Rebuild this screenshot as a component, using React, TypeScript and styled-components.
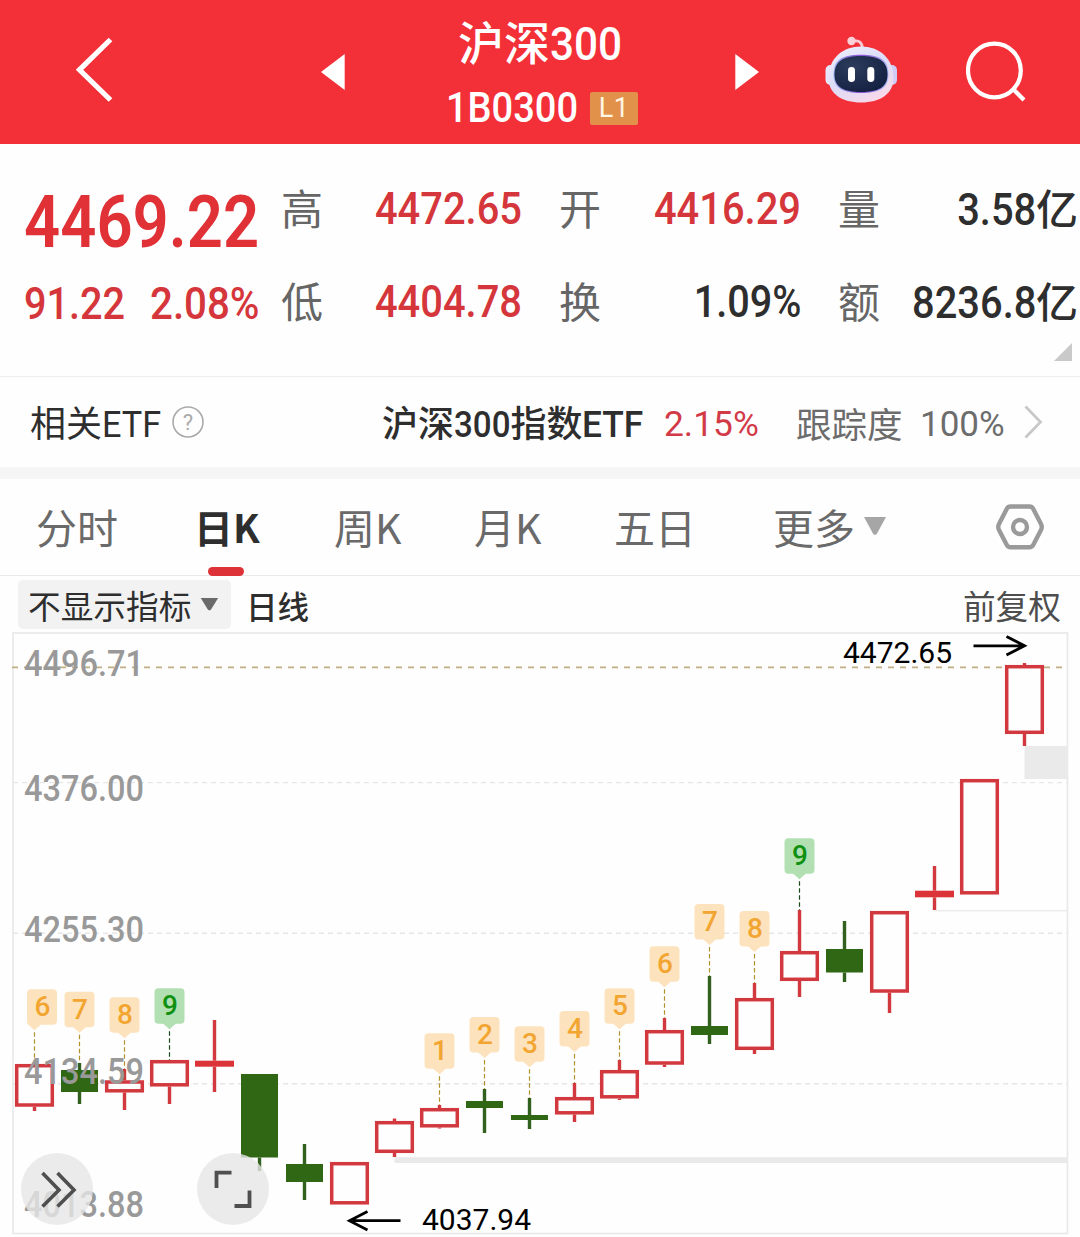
import React from "react";
import styled, { createGlobalStyle } from "styled-components";

const GlobalStyle = createGlobalStyle`
  * { box-sizing: border-box; }
  body { margin: 0; background: #fefefe; }
`;

const SANS = `Roboto, "Noto Sans CJK SC", sans-serif`;
const CJK = `"Noto Sans CJK SC", Roboto, sans-serif`;

const Page = styled.main`
  width: 1080px;
  height: 1237px;
  overflow: hidden;
  display: flex;
  flex-direction: column;
  background: #fefefe;
  color: #2e2e2e;
  font-family: ${CJK};
`;

/* Roboto figures squeezed to the narrow proportions of a DIN face */
const Figure = styled.span<{
  $size: number;
  $squeeze?: number;
  $weight?: number;
  $from?: "left" | "right";
  $color?: string;
  $trim?: number;
}>`
  display: inline-block;
  flex: none;
  margin-right: ${(p) => -(p.$trim ?? 0)}px;
  font-family: ${SANS};
  font-size: ${(p) => p.$size}px;
  font-weight: ${(p) => p.$weight ?? 500};
  line-height: 1;
  white-space: nowrap;
  color: ${(p) => p.$color ?? "inherit"};
  transform: scaleX(${(p) => p.$squeeze ?? 1});
  transform-origin: ${(p) => p.$from ?? "left"} center;
`;

const Han = styled.span<{ $size: number; $weight?: number; $color?: string }>`
  flex: none;
  font-size: ${(p) => p.$size}px;
  font-weight: ${(p) => p.$weight ?? 400};
  line-height: 1;
  white-space: nowrap;
  color: ${(p) => p.$color ?? "inherit"};
`;

/* ---------- header ---------- */

const Header = styled.header`
  flex: none;
  height: 144px;
  display: grid;
  grid-template-columns: 245px 24px 390px 24px 72px 60px;
  column-gap: 0;
  padding-left: 76px;
  background: #f32f38;
  color: #fff;
  align-items: center;
  & > :nth-child(1) { margin-bottom: 4px; }
  & > :nth-child(5) { margin-left: 66px; margin-bottom: 4px; }
  & > :nth-child(6) { margin-left: 135px; }
`;

const TitleBlock = styled.div`
  height: 144px;
  padding-top: 17px;
  display: flex;
  flex-direction: column;
  align-items: center;
`;

const TitleLine = styled.div`
  width: 164px;
  height: 52px;
  display: flex;
  align-items: baseline;
`;

const CodeLine = styled.div`
  width: 192px;
  height: 33px;
  margin-top: 23px;
  margin-left: 4px;
  display: flex;
  justify-content: space-between;
  align-items: center;
`;

const CodeSlot = styled.div`
  width: 132px;
  height: 42px;
  margin-top: -2px;
`;

const LevelTag = styled.div`
  width: 48px;
  height: 33px;
  border-radius: 2px;
  background: #e2914a;
  display: flex;
  align-items: center;
  justify-content: center;
  font: 400 27px/33px Roboto, sans-serif;
  letter-spacing: 0.5px;
  color: #fff6e4;
`;

/* ---------- quote ---------- */

const Quote = styled.section`
  flex: none;
  position: relative;
  height: 233px;
  padding: 18px 2px 0 25px;
  border-bottom: 1px solid #ededed;
  display: grid;
  grid-template-columns: 256px 278px 279px 1fr;
  grid-template-rows: 93px 93px;
`;

const Latest = styled.div`
  padding-top: 24px;
  margin-left: -1px;
  color: #e03236;
`;

const Change = styled.div`
  display: grid;
  grid-template-columns: 126px 1fr;
  align-items: center;
  padding-top: 4px;
  margin-left: -1px;
  color: #d5363b;
`;

const Cell = styled.div<{ $tone?: "up" | "plain"; $end?: boolean }>`
  display: flex;
  align-items: center;
  justify-content: space-between;
  padding-right: ${(p) => (p.$end ? 0 : 37)}px;
  color: ${(p) => (p.$tone === "up" ? "#d5363b" : "#2e2e2e")};
`;

const Label = styled.span`
  flex: none;
  padding-bottom: 4px;
  font-size: 42px;
  line-height: 1;
  color: #666;
`;

const Amount = styled.div`
  display: flex;
  align-items: baseline;
`;

const Corner = styled.i`
  position: absolute;
  right: 8px;
  bottom: 15px;
  width: 18px;
  height: 18px;
  background: #c9c9c9;
  clip-path: polygon(100% 0, 100% 100%, 0 100%);
`;

/* ---------- related ETF ---------- */

const EtfRow = styled.section`
  flex: none;
  height: 102px;
  padding: 2px 38px 0 30px;
  border-bottom: 12px solid #f5f5f5;
  display: grid;
  grid-template-columns: 141px 211px 282px 132px 124px 104px 18px;
  align-items: center;
  & > svg { margin-bottom: 2px; }
`;

const Phrase = styled.div`
  display: flex;
  align-items: baseline;
`;

const EtfNumber = styled.div`
  padding-top: 2px;
`;

/* ---------- tabs ---------- */

const Tabs = styled.nav`
  flex: none;
  height: 97px;
  padding-left: 36px;
  border-bottom: 1px solid #e9e9e9;
  display: grid;
  grid-template-columns: 161px 137px 140px 140px 159px 223px 48px;
  align-items: center;
  color: #6a6a6a;
`;

const Tab = styled.div<{ $active?: boolean }>`
  position: relative;
  height: 96px;
  padding-bottom: 2px;
  display: flex;
  align-items: center;
  font-size: ${(p) => (p.$active ? 39 : 41)}px;
  text-indent: ${(p) => (p.$active ? -3 : 0)}px;
  line-height: 1;
  font-weight: ${(p) => (p.$active ? 700 : 400)};
  color: ${(p) => (p.$active ? "#2e2e2e" : "inherit")};
`;

const Underline = styled.i`
  position: absolute;
  left: 11px;
  bottom: -1px;
  width: 36px;
  height: 9px;
  border-radius: 5px;
  background: #dd3338;
`;

const Down = styled.i<{ $w: number; $h: number; $color: string; $gap: number }>`
  width: ${(p) => p.$w}px;
  height: ${(p) => p.$h}px;
  margin-left: ${(p) => p.$gap}px;
  background: ${(p) => p.$color};
  clip-path: polygon(0 0, 100% 0, 58% 94%, 50% 100%, 42% 94%);
`;

/* ---------- indicator bar ---------- */

const IndicatorBar = styled.div`
  flex: none;
  height: 56px;
  padding: 0 19px 0 18px;
  display: flex;
  align-items: center;
  & > span { padding-top: 3px; }
`;

const Picker = styled.div`
  width: 213px;
  height: 49px;
  padding-left: 10px;
  margin-right: 15px;
  border-radius: 5px;
  background: #f2f2f2;
  display: flex;
  align-items: center;
  & > span { padding-top: 3px; }
`;

const Push = styled.div`
  flex: 1;
`;

/* ---------- chart ---------- */

const ChartArea = styled.section`
  flex: none;
  position: relative;
  height: 605px;
`;

const Plot = styled.svg`
  display: block;
`;

const RoundButton = styled.button<{ $left: number }>`
  position: absolute;
  left: ${(p) => p.$left}px;
  top: 521px;
  width: 72px;
  height: 72px;
  padding: 0;
  border: 0;
  border-radius: 50%;
  background: rgba(230, 230, 230, 0.8);
`;

type Candle = {
  x: number;
  top: number;
  bottom: number;
  high: number;
  low: number;
  kind?: "down" | "flat";
};

const candles: Candle[] = [
  { x: 34.5, top: 1064, bottom: 1106.7, high: 1064, low: 1111 },
  { x: 79.5, top: 1070, bottom: 1092, high: 1063, low: 1104, kind: "down" },
  { x: 124.5, top: 1080.3, bottom: 1092.5, high: 1069, low: 1110 },
  { x: 169.5, top: 1060, bottom: 1086.5, high: 1060, low: 1104 },
  { x: 214.5, top: 1060.7, bottom: 1066.7, high: 1020, low: 1092, kind: "flat" },
  { x: 259.5, top: 1074, bottom: 1157.5, high: 1074, low: 1171, kind: "down" },
  { x: 304.5, top: 1164, bottom: 1182, high: 1144, low: 1200, kind: "down" },
  { x: 349.5, top: 1162, bottom: 1204.5, high: 1162, low: 1204 },
  { x: 394.5, top: 1121, bottom: 1153, high: 1118.5, low: 1157 },
  { x: 439.5, top: 1108, bottom: 1127.5, high: 1105, low: 1128.5 },
  { x: 484.5, top: 1101, bottom: 1108, high: 1089, low: 1133, kind: "down" },
  { x: 529.5, top: 1115, bottom: 1120, high: 1098, low: 1129, kind: "down" },
  { x: 574.5, top: 1097, bottom: 1114.5, high: 1083, low: 1122 },
  { x: 619.5, top: 1070, bottom: 1098.5, high: 1060, low: 1100 },
  { x: 664.5, top: 1030, bottom: 1064.7, high: 1018, low: 1067 },
  { x: 709.5, top: 1026, bottom: 1035, high: 976, low: 1044, kind: "down" },
  { x: 754.5, top: 998, bottom: 1050, high: 983, low: 1054 },
  { x: 799.5, top: 951, bottom: 981, high: 910, low: 997 },
  { x: 844.5, top: 949, bottom: 972.5, high: 921, low: 982, kind: "down" },
  { x: 889.5, top: 911, bottom: 992.7, high: 911, low: 1013 },
  { x: 934.5, top: 890.7, bottom: 897.3, high: 866, low: 910, kind: "flat" },
  { x: 979.5, top: 779, bottom: 894.5, high: 779, low: 894 },
  { x: 1024.5, top: 665, bottom: 734, high: 663, low: 746 },
];

type Marker = { x: number; top: number; n: number; to: number; shift?: number };

const markers: Marker[] = [
  { x: 34.5, top: 989.3, n: 6, to: 1064, shift: 7.5 },
  { x: 79.5, top: 991.7, n: 7, to: 1063 },
  { x: 124.5, top: 997.3, n: 8, to: 1069 },
  { x: 169.5, top: 988.3, n: 9, to: 1060 },
  { x: 439.5, top: 1033.3, n: 1, to: 1105 },
  { x: 484.5, top: 1017, n: 2, to: 1089 },
  { x: 529.5, top: 1026.3, n: 3, to: 1098 },
  { x: 574.5, top: 1011, n: 4, to: 1083 },
  { x: 619.5, top: 988.3, n: 5, to: 1060 },
  { x: 664.5, top: 946.3, n: 6, to: 1018 },
  { x: 709.5, top: 904, n: 7, to: 976 },
  { x: 754.5, top: 911, n: 8, to: 983 },
  { x: 799.5, top: 838.3, n: 9, to: 910 },
];

const axis = [
  { y: 675.7, label: "4496.71" },
  { y: 801, label: "4376.00" },
  { y: 942, label: "4255.30" },
  { y: 1083.7, label: "4134.59" },
  { y: 1217, label: "4013.88" },
];

const RED = "#d2393f";
const GREEN = "#2f6714";

function CandleShape({ x, top, bottom, high, low, kind }: Candle) {
  const color = kind === "down" ? GREEN : kind === "flat" ? "#dc3338" : RED;
  const wick = kind === "down" ? "#32601f" : RED;
  return (
    <g>
      {high < top && <rect x={x - 1.7} y={high} width={3.4} height={top - high} fill={wick} />}
      {low > bottom && <rect x={x - 1.7} y={bottom} width={3.4} height={low - bottom} fill={wick} />}
      {kind === "down" ? (
        <rect x={x - 18.5} y={top} width={37} height={bottom - top} fill={color} />
      ) : kind === "flat" ? (
        <rect x={x - 19.5} y={top} width={39} height={bottom - top} fill={color} />
      ) : (
        <rect
          x={x - 17.8}
          y={top + 1.7}
          width={35.6}
          height={bottom - top - 3.4}
          fill="#fefefe"
          stroke={color}
          strokeWidth={3.5}
        />
      )}
    </g>
  );
}

function MarkerShape({ x, top, n, to, shift = 0 }: Marker) {
  const cx = x + shift;
  const nine = n === 9;
  const fill = nine ? "#b2e0b2" : "#fde3bd";
  return (
    <g>
      <line
        x1={x}
        x2={x}
        y1={top + 43}
        y2={to}
        stroke={nine ? "#1d4a1d" : "#b3912f"}
        strokeWidth={1.2}
        strokeDasharray="4.5 2.5"
      />
      <path d={`M${x - 8} ${top + 34} L${x} ${top + 41} L${x + 8} ${top + 34} Z`} fill={fill} />
      <rect x={cx - 15} y={top} width={30} height={35.5} rx={4} fill={fill} />
      <text
        x={cx + 0.5}
        y={top + 26.9}
        textAnchor="middle"
        fontFamily="Roboto, sans-serif"
        fontSize={28}
        fontWeight={500}
        fill={nine ? "#109010" : "#f2a530"}
      >
        {n}
      </text>
    </g>
  );
}

function Chart() {
  return (
    <Plot width="1080" height="605" viewBox="0 632 1080 605">
      <rect x="13" y="633" width="1054.5" height="600.5" fill="none" stroke="#e8e8e8" strokeWidth="1.6" />
      <g stroke="#e6e6e6" strokeWidth="1.4" strokeDasharray="5 4">
        <line x1="13" x2="1067" y1="782.6" y2="782.6" />
        <line x1="13" x2="1067" y1="933.2" y2="933.2" />
        <line x1="13" x2="1067" y1="1083.8" y2="1083.8" />
      </g>
      <line x1="12" x2="1067" y1="667.3" y2="667.3" stroke="#bfae84" strokeWidth="1.8" strokeDasharray="6 6" />
      <rect x="1024.5" y="746" width="43.5" height="33" fill="#eaeaea" />
      <rect x="934.5" y="910" width="133" height="1.4" fill="#ebebeb" />
      <rect x="394.5" y="1157.2" width="673.5" height="5.8" fill="#e9e9e9" />
      {candles.map((c) => (
        <CandleShape key={c.x} {...c} />
      ))}
      {markers.map((m) => (
        <MarkerShape key={m.x} {...m} />
      ))}
      <g fontFamily="Roboto, sans-serif" fontSize="36" fontWeight="500" fill="#999">
        {axis.map((a) => (
          <text key={a.label} x="24" y={a.y} textLength="120" lengthAdjust="spacingAndGlyphs">
            {a.label}
          </text>
        ))}
      </g>
      <g fontFamily="Roboto, sans-serif" fontSize="30" fill="#000">
        <text x="843" y="663.2">4472.65</text>
        <text x="422" y="1230">4037.94</text>
      </g>
      <g fill="none" stroke="#000" strokeWidth="2.8">
        <path d="M973.5 645.8 H1024 M1006.5 636.5 L1024.5 645.8 L1006.5 655" />
        <path d="M400.5 1220.7 H350 M367.5 1211.5 L349.5 1220.7 L367.5 1230" />
      </g>
    </Plot>
  );
}

/* ---------- icons ---------- */

const BackIcon = () => (
  <svg width="40" height="66" viewBox="76 37 40 66">
    <path d="M110.5 39.5 L79.5 69.8 L110.5 100" fill="none" stroke="#fff" strokeWidth="5.2" />
  </svg>
);

const Triangle = ({ flip }: { flip?: boolean }) => (
  <svg width="24" height="36" viewBox="0 0 24 36">
    <path d={flip ? "M0.3 0 L24 18 L0.3 36 Z" : "M23.7 0 L0 18 L23.7 36 Z"} fill="#fff" />
  </svg>
);

const RobotIcon = () => (
  <svg width="72" height="68" viewBox="0 0 72 68">
    <defs>
      <linearGradient id="shell" x1="0" y1="0" x2="0.6" y2="1">
        <stop offset="0" stopColor="#eef0fb" />
        <stop offset="0.55" stopColor="#dcdcf8" />
        <stop offset="1" stopColor="#f6d9ea" />
      </linearGradient>
      <linearGradient id="rim" x1="0" y1="0" x2="1" y2="0">
        <stop offset="0" stopColor="#9db2f2" />
        <stop offset="0.5" stopColor="#8a4fd0" />
        <stop offset="1" stopColor="#a9b8f6" />
      </linearGradient>
      <radialGradient id="face" cx="0.35" cy="0.3" r="0.8">
        <stop offset="0" stopColor="#2d3c5c" />
        <stop offset="1" stopColor="#131f40" />
      </radialGradient>
    </defs>
    <path d="M27 5.5 C33 3.5 37 6 37.5 12" fill="none" stroke="#f9c9d3" strokeWidth="2.8" />
    <circle cx="26.5" cy="5" r="4.2" fill="#fbd0d8" />
    <rect x="0.5" y="29" width="12" height="20" rx="5" fill="#e7e5fa" />
    <rect x="60" y="29" width="12" height="20" rx="5" fill="#cfcdf6" />
    <path
      d="M36 10.5 C54 10.5 68.5 22 68.5 42 C68.5 58 55 66.5 36 66.5 C17 66.5 3.5 58 3.5 42 C3.5 22 18 10.5 36 10.5 Z"
      fill="url(#shell)"
    />
    <path
      d="M36 18.8 C54 18.8 63.5 23 63.5 38.5 C63.5 52.5 54 57 36 57 C18 57 8.5 52.5 8.5 38.5 C8.5 23 18 18.8 36 18.8 Z"
      fill="url(#rim)"
    />
    <path
      d="M36 20 C53 20 62.5 24.5 62.5 38.5 C62.5 51.5 53 56 36 56 C19 56 9.5 51.5 9.5 38.5 C9.5 24.5 19 20 36 20 Z"
      fill="url(#face)"
    />
    <rect x="23" y="31" width="7" height="15" rx="3.4" fill="#fff" />
    <rect x="42.3" y="31" width="7" height="15" rx="3.4" fill="#fff" />
  </svg>
);

const SearchIcon = () => (
  <svg width="60" height="62" viewBox="966 41 60 62">
    <g fill="none" stroke="#fff" strokeWidth="4.2">
      <ellipse cx="994.4" cy="70.5" rx="26.4" ry="26.8" />
      <path d="M1013.3 89.3 L1024 100" />
    </g>
  </svg>
);

const HelpIcon = () => (
  <svg width="34" height="34" viewBox="0 0 34 34">
    <circle cx="17" cy="17" r="15" fill="none" stroke="#aaa" strokeWidth="1.6" />
    <text x="17" y="25" textAnchor="middle" fontFamily="Roboto, sans-serif" fontSize="22" fill="#aaa">
      ?
    </text>
  </svg>
);

const ChevronRight = () => (
  <svg width="20" height="34" viewBox="0 0 20 34">
    <path d="M1.5 1.5 L16.5 17 L1.5 32.5" fill="none" stroke="#c8c8c8" strokeWidth="2.8" />
  </svg>
);

const SettingsIcon = () => (
  <svg width="48" height="48" viewBox="996 503 48 48">
    <g fill="none" stroke="#9a9a9a" strokeWidth="4.4" strokeLinejoin="round">
      <path d="M1010.5 506.5 H1029.5 Q1032 506.5 1033.2 508.7 L1041 524 Q1042.5 527 1041 530 L1033.2 545 Q1032 547.3 1029.5 547.3 H1010.5 Q1008 547.3 1006.8 545 L999 530 Q997.5 527 999 524 L1006.8 508.7 Q1008 506.5 1010.5 506.5 Z" />
      <circle cx="1020" cy="527" r="7" />
    </g>
  </svg>
);

export default function App() {
  return (
    <Page>
      <GlobalStyle />
      <Header>
        <BackIcon />
        <Triangle />
        <TitleBlock>
          <TitleLine>
            <Han $size={46} $weight={500}>沪深</Han>
            <Figure $size={47} $squeeze={0.9}>300</Figure>
          </TitleLine>
          <CodeLine>
            <CodeSlot>
              <Figure $size={42} $squeeze={0.905}>1B0300</Figure>
            </CodeSlot>
            <LevelTag>L1</LevelTag>
          </CodeLine>
        </TitleBlock>
        <Triangle flip />
        <RobotIcon />
        <SearchIcon />
      </Header>

      <Quote>
        <Latest>
          <Figure $size={73} $squeeze={0.868} $weight={600}>4469.22</Figure>
        </Latest>
        <Cell $tone="up">
          <Label>高</Label>
          <Figure $size={45} $squeeze={0.886} $from="right">4472.65</Figure>
        </Cell>
        <Cell $tone="up">
          <Label>开</Label>
          <Figure $size={45} $squeeze={0.886} $from="right">4416.29</Figure>
        </Cell>
        <Cell $end>
          <Label>量</Label>
          <Amount>
            <Figure $size={45} $squeeze={0.886} $from="right">3.58</Figure>
            <Han $size={42} $weight={500}>亿</Han>
          </Amount>
        </Cell>
        <Change>
          <Figure $size={44} $squeeze={0.9}>91.22</Figure>
          <Figure $size={44} $squeeze={0.915}>2.08%</Figure>
        </Change>
        <Cell $tone="up">
          <Label>低</Label>
          <Figure $size={45} $squeeze={0.886} $from="right">4404.78</Figure>
        </Cell>
        <Cell>
          <Label>换</Label>
          <Figure $size={45} $squeeze={0.88} $from="right">1.09%</Figure>
        </Cell>
        <Cell $end>
          <Label>额</Label>
          <Amount>
            <Figure $size={45} $squeeze={0.886} $from="right">8236.8</Figure>
            <Han $size={42} $weight={500}>亿</Han>
          </Amount>
        </Cell>
        <Corner />
      </Quote>

      <EtfRow>
        <Phrase>
          <Han $size={36}>相关</Han>
          <Figure $size={36} $weight={400} $squeeze={0.95}>ETF</Figure>
        </Phrase>
        <HelpIcon />
        <Phrase>
          <Han $size={36} $weight={500}>沪深</Han>
          <Figure $size={36} $squeeze={0.92} $trim={5}>300</Figure>
          <Han $size={36} $weight={500}>指数</Han>
          <Figure $size={36} $squeeze={0.98}>ETF</Figure>
        </Phrase>
        <EtfNumber>
          <Figure $size={35} $weight={400} $squeeze={1.01} $color="#d33a48">2.15%</Figure>
        </EtfNumber>
        <Han $size={35.5} $color="#6c6c6c">跟踪度</Han>
        <EtfNumber>
          <Figure $size={35} $weight={400} $color="#6c6c6c">100%</Figure>
        </EtfNumber>
        <ChevronRight />
      </EtfRow>

      <Tabs>
        <Tab>分时</Tab>
        <Tab $active>
          日K
          <Underline />
        </Tab>
        <Tab>周K</Tab>
        <Tab>月K</Tab>
        <Tab>五日</Tab>
        <Tab>
          更多
          <Down $w={22} $h={18} $gap={9} $color="#a6a6a6" />
        </Tab>
        <SettingsIcon />
      </Tabs>

      <IndicatorBar>
        <Picker>
          <Han $size={32.7}>不显示指标</Han>
          <Down $w={18} $h={13} $gap={9} $color="#6a6a6a" />
        </Picker>
        <Han $size={31.5} $weight={500}>日线</Han>
        <Push />
        <Han $size={32.7} $color="#4d4d4d">前复权</Han>
      </IndicatorBar>

      <ChartArea>
        <Chart />
        <RoundButton $left={21} aria-label="展开">
          <svg width="72" height="72" viewBox="21 1153 72 72">
            <path
              d="M42.5 1173 L59 1190 L42.5 1206.5 M57.5 1173 L74 1190 L57.5 1206.5"
              fill="none"
              stroke="#4f4f4f"
              strokeWidth="3.6"
            />
          </svg>
        </RoundButton>
        <RoundButton $left={197} aria-label="全屏">
          <svg width="72" height="72" viewBox="197 1153 72 72">
            <path
              d="M231.5 1172.7 H216.5 V1188 M234.5 1206 H249.5 V1190.5"
              fill="none"
              stroke="#4f4f4f"
              strokeWidth="3.8"
            />
          </svg>
        </RoundButton>
      </ChartArea>
    </Page>
  );
}
